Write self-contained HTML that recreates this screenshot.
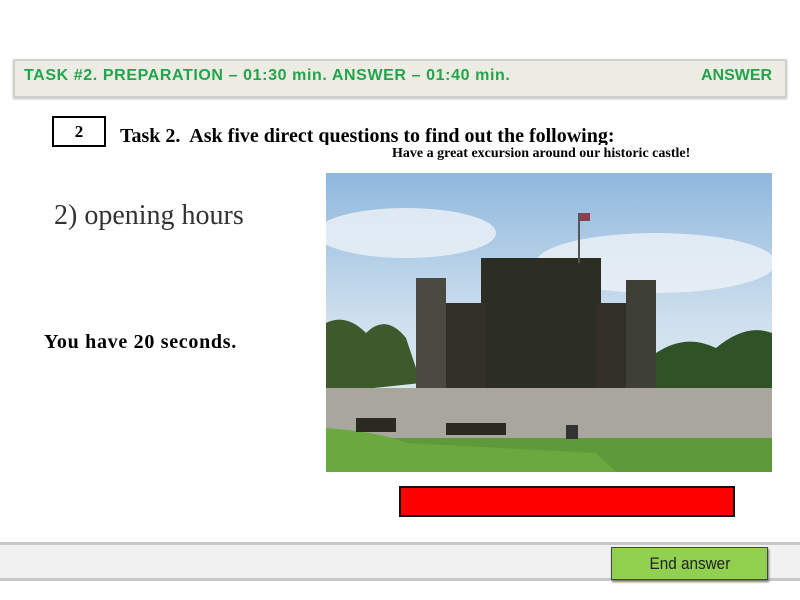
<!DOCTYPE html>
<html><head><meta charset="utf-8"><style>
body{margin:0;width:800px;height:600px;background:#fff;position:relative;overflow:hidden;font-family:"Liberation Serif",serif}
.a{position:absolute}
</style></head><body>
<div class="a" style="left:13px;top:59px;width:770px;height:35px;background:#ecece4;border:2px solid #cfcfcb;border-radius:2px;box-shadow:0 1px 2px #bbb"></div>
<div class="a" style="left:24px;top:67px;font:bold 16px 'Liberation Sans',sans-serif;color:#22a54a;letter-spacing:0.6px">TASK #2. PREPARATION – 01:30 min. ANSWER – 01:40 min.</div>
<div class="a" style="left:701px;top:67px;font:bold 16px 'Liberation Sans',sans-serif;color:#22a54a">ANSWER</div>
<div class="a" style="left:52px;top:116px;width:50px;height:27px;border:2px solid #000;font:bold 17px 'Liberation Serif',serif;text-align:center;line-height:27px">2</div>
<div class="a" style="left:120px;top:125px;font:bold 20px 'Liberation Serif',serif;height:20px;overflow:hidden;white-space:nowrap">Task 2.&nbsp; Ask five direct questions to find out the following:</div>
<div class="a" style="left:388px;top:146px;font:bold 14px 'Liberation Serif',serif;background:#fff;padding:0 4px;white-space:nowrap">Have a great excursion around our historic castle!</div>
<div class="a" style="left:54px;top:200px;font:28px 'Liberation Serif',serif;color:#333">2) opening hours</div>
<div class="a" style="left:44px;top:331px;font:bold 20px 'Liberation Serif',serif;letter-spacing:0.7px">You have 20 seconds.</div>
<svg class="a" style="left:326px;top:173px" width="446" height="299" viewBox="0 0 446 299">
<defs><linearGradient id="s" x1="0" y1="0" x2="0" y2="1"><stop offset="0" stop-color="#8fb8de"/><stop offset=".5" stop-color="#cfe0ee"/><stop offset="1" stop-color="#e6eef2"/></linearGradient></defs>
<rect width="446" height="299" fill="url(#s)"/>
<ellipse cx="80" cy="60" rx="90" ry="25" fill="#eef3f7" opacity=".8"/>
<ellipse cx="330" cy="90" rx="120" ry="30" fill="#eef3f7" opacity=".8"/>
<path d="M0 150 Q20 140 40 160 Q60 140 80 165 L95 210 L0 220Z" fill="#3c5a2c"/>
<path d="M330 180 Q360 160 390 175 Q420 150 446 160 L446 220 L330 220Z" fill="#2f5226"/>
<rect x="90" y="105" width="30" height="120" fill="#4a4a40"/>
<rect x="155" y="85" width="120" height="140" fill="#2c2e24"/>
<rect x="120" y="130" width="40" height="95" fill="#33302a"/>
<rect x="270" y="130" width="40" height="95" fill="#33302a"/>
<rect x="300" y="107" width="30" height="118" fill="#3e3f36"/>
<rect x="252" y="40" width="2" height="50" fill="#555"/>
<rect x="254" y="40" width="10" height="8" fill="#8a4050"/>
<rect x="0" y="215" width="446" height="50" fill="#a9a79d"/>
<path d="M0 265 L446 265 L446 299 L0 299Z" fill="#5f9a3a"/>
<path d="M0 255 Q60 260 80 270 L270 280 L290 299 L0 299Z" fill="#6aa840"/>
<rect x="120" y="250" width="60" height="12" fill="#2a2a22"/>
<rect x="30" y="245" width="40" height="14" fill="#2a2a22"/>
<rect x="240" y="252" width="12" height="14" fill="#333"/>
</svg>
<div class="a" style="left:399px;top:486px;width:332px;height:27px;background:#ff0000;border:2px solid #111"></div>
<div class="a" style="left:0;top:542px;width:800px;height:39px;background:#f1f1f1;border-top:3px solid #c8c8c8;border-bottom:3px solid #c8c8c8;box-sizing:border-box"></div>
<div class="a" style="left:611px;top:547px;width:155px;height:31px;background:#92d050;border:1px solid #444;box-shadow:1px 2px 2px #777;font:17px 'Liberation Sans',sans-serif;color:#222;text-align:center;line-height:31px"><span style="display:inline-block;transform:scaleX(0.9)">End answer</span></div>
</body></html>
